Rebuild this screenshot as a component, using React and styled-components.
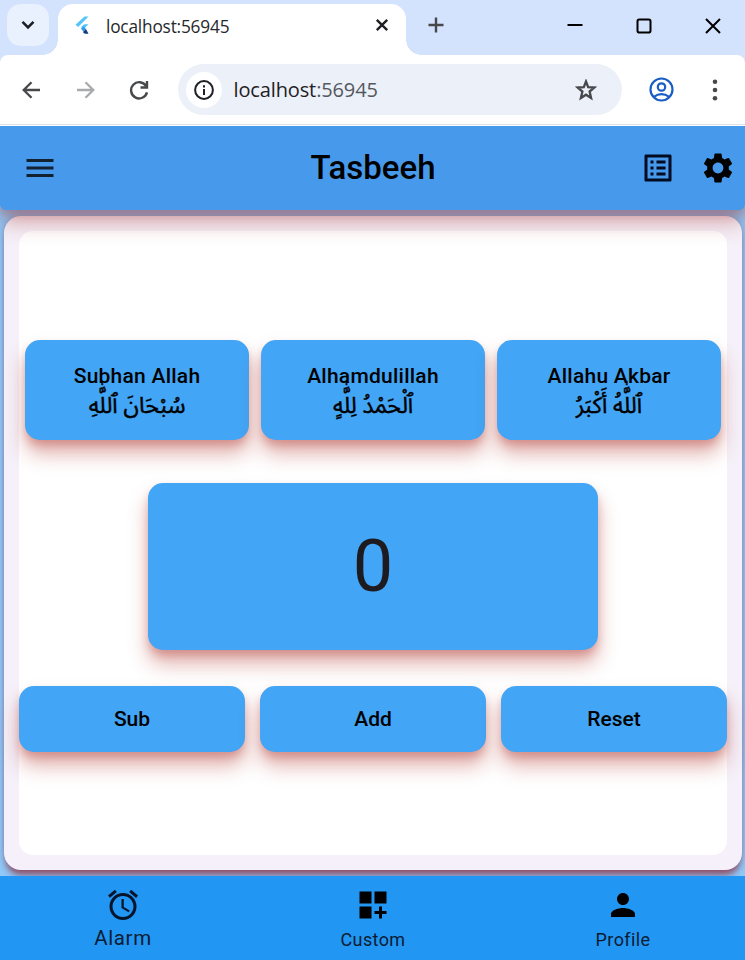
import React from "react";
import styled, { createGlobalStyle } from "styled-components";
import {
  MdMenu,
  MdListAlt,
  MdSettings,
  MdAlarm,
  MdDashboardCustomize,
  MdPerson,
} from "react-icons/md";

const GlobalStyle = createGlobalStyle`
  *, *::before, *::after { box-sizing: border-box; }
  body { margin: 0; }
  button { border: 0; padding: 0; background: none; font: inherit; color: inherit; }
  svg { display: block; flex: none; }
`;

const Window = styled.div`
  display: flex;
  flex-direction: column;
  width: 745px;
  height: 960px;
  overflow: hidden;
  background: #d3e2fd;
  font-family: Roboto, "Liberation Sans", sans-serif;
  color: #000;
`;

const TabStrip = styled.div`
  display: flex;
  flex: none;
  height: 55px;
  padding-left: 7px;
`;

const TabSearch = styled.button`
  display: grid;
  place-items: center;
  width: 42px;
  height: 42px;
  margin-top: 4px;
  border-radius: 14px;
  background: #e9f0fe;
`;

const Tab = styled.div`
  position: relative;
  display: flex;
  align-items: center;
  width: 348px;
  height: 51px;
  margin: 4px 0 0 9px;
  padding: 0 16px 8px 17px;
  border-radius: 15px 15px 0 0;
  background: #fff;

  &::before,
  &::after {
    content: "";
    position: absolute;
    bottom: 0;
    width: 15px;
    height: 15px;
  }
  &::before {
    left: -15px;
    background: radial-gradient(circle at 0 0, transparent 14.5px, #fff 15px);
  }
  &::after {
    right: -15px;
    background: radial-gradient(circle at 100% 0, transparent 14.5px, #fff 15px);
  }
`;

const TabTitle = styled.span`
  flex: 1;
  margin: 3px 0 0 14px;
  font: 400 17.3px/24px "Open Sans", "Noto Sans", sans-serif;
  letter-spacing: -0.2px;
  color: #26282c;
`;

const NewTab = styled.button`
  display: grid;
  place-items: center;
  width: 30px;
  height: 50px;
  margin-left: 15px;
`;

const WindowControls = styled.div`
  display: flex;
  gap: 53px;
  margin: 18px 0 0 116px;
`;

const Toolbar = styled.div`
  display: flex;
  align-items: center;
  flex: none;
  height: 71px;
  padding: 0 0 1px 22px;
  border-bottom: 1px solid #fff;
  border-radius: 8px 8px 0 0;
  background: #fff;
  box-shadow: inset 0 -1px #dde1e6;
`;

const NavButtons = styled.div`
  display: flex;
  align-items: center;
  gap: 34.5px;
`;

const AddressBar = styled.div`
  display: flex;
  align-items: center;
  width: 444px;
  height: 51px;
  margin-left: 29px;
  padding: 0 25px 0 8px;
  border-radius: 26px;
  background: #ecf0f9;
`;

const SiteInfo = styled.button`
  display: grid;
  place-items: center;
  width: 36px;
  height: 36px;
  border-radius: 50%;
  background: #fff;
`;

const Url = styled.span`
  flex: 1;
  margin-left: 11.5px;
  font: 400 20px/28px "Open Sans", "Noto Sans", sans-serif;
  letter-spacing: -0.13px;
  color: #1f2024;
`;

const Port = styled.span`
  color: #55585e;
`;

const ToolbarEnd = styled.div`
  display: flex;
  align-items: center;
  gap: 38px;
  margin-left: 26.5px;
`;

const AppScreen = styled.div`
  display: flex;
  flex-direction: column;
  flex: 1;
  min-height: 0;
  overflow: hidden;
  background: #90caf9;
`;

const AppBar = styled.header`
  position: relative;
  z-index: 1;
  display: grid;
  grid-template-columns: 1fr auto 1fr;
  align-items: center;
  flex: none;
  height: 84px;
  padding: 0 9px 0 22px;
  border-radius: 0 0 6px 6px;
  background: #4799eb;
  box-shadow:
    0 12px 22px rgba(165, 50, 45, 0.4),
    0 5px 9px rgba(150, 50, 50, 0.22);
`;

const Title = styled.h1`
  margin: 0 12px 0 0;
  font-size: 33px;
  font-weight: 500;
  line-height: 40px;
`;

const AppBarActions = styled.div`
  display: flex;
  justify-content: flex-end;
  gap: 24px;
`;

const Card = styled.main`
  display: flex;
  flex: 1;
  min-height: 0;
  margin: 6px 3px 6px 4px;
  padding: 15px;
  border-radius: 17px;
  background: #f5f0f9;
  box-shadow:
    0 8px 7px -3px rgba(150, 30, 40, 0.65),
    0 1px 7px rgba(110, 115, 165, 0.6);
`;

const CardBody = styled.div`
  display: flex;
  flex-direction: column;
  align-items: center;
  flex: 1;
  padding-top: 109px;
  border-radius: 14px;
  background: #fff;
`;

const Tile = styled.button`
  display: flex;
  flex-direction: column;
  align-items: center;
  justify-content: center;
  border-radius: 15px;
  background: #42a5f5;
  box-shadow:
    0 14px 20px rgba(180, 55, 45, 0.38),
    0 6px 8px -1px rgba(170, 50, 45, 0.3);
`;

const PhraseRow = styled.div`
  display: flex;
  gap: 12px;
`;

const PhraseTile = styled(Tile)`
  width: 224px;
  height: 100.4px;
  padding-top: 2px;
`;

const Label = styled.span`
  font-size: 21px;
  font-weight: 500;
  line-height: 30px;
`;

const PhraseName = styled(Label)`
  letter-spacing: 0.24px;
`;

const Arabic = styled(Label)`
  font-family: "Noto Sans Arabic", "DejaVu Sans", sans-serif;
  font-size: 22.6px;
  font-weight: 400;
  -webkit-text-stroke: 0.45px #000;
`;

const CounterTile = styled(Tile)`
  width: 450px;
  height: 167.300px;
  margin-top: 42.300px;
  padding-top: 1px;
  font-size: 72px;
  color: #1d1b20;
`;

const ActionRow = styled.div`
  display: flex;
  gap: 15px;
  margin-top: 36px;
`;

const ActionTile = styled(Tile)`
  width: 226px;
  height: 66px;
`;

const BottomNav = styled.nav`
  position: relative;
  display: grid;
  grid-template-columns: 246px 254px 246px;
  flex: none;
  height: 84px;
  background: #2196f3;
`;

const NavItem = styled.button`
  display: flex;
  flex-direction: column;
  align-items: center;
  padding-top: 11px;
`;

const NavLabel = styled.span`
  margin-top: ${(p) => (p.$active ? "1px" : "3px")};
  font-size: ${(p) => (p.$active ? "20.5px" : "18px")};
  line-height: 28px;
  letter-spacing: ${(p) => (p.$active ? "0.6px" : "0.4px")};
  color: #0b1c33;
`;

const Stroke = styled.svg.attrs({ fill: "none" })`
  stroke: ${(p) => p.$color || "#47484a"};
  stroke-width: ${(p) => p.$weight || 2};
`;

function FlutterLogo() {
  return (
    <svg width="17" height="19" viewBox="0 0 17 19">
      <path fill="#54c5f8" d="M9.500 0.500H13.500L3.200 11 0.500 8.700z" />
      <path fill="#54c5f8" d="M9.300 8.200h4.200L8.500 13.300 6 11z" />
      <path fill="#2a9be8" d="M6 12.800l2.500-2.400L11 13l-2.500 2.500z" />
      <path fill="#123a7c" d="M8.500 15.500L11 13l2.500 4.700H9.800L7.800 16z" />
    </svg>
  );
}

const phrases = [
  { name: "Subhan Allah", arabic: "سُبْحَانَ ٱللَّٰهِ" },
  { name: "Alhamdulillah", arabic: "ٱلْحَمْدُ لِلَّٰهٍ" },
  { name: "Allahu Akbar", arabic: "ٱللَّٰهُ أَكْبَرُ" },
];

const actions = ["Sub", "Add", "Reset"];

const navItems = [
  { label: "Alarm", Icon: MdAlarm, active: true },
  { label: "Custom", Icon: MdDashboardCustomize },
  { label: "Profile", Icon: MdPerson },
];

function BrowserChrome() {
  return (
    <>
      <TabStrip>
        <TabSearch>
          <Stroke $color="#1b1e25" $weight={2.6} width="14" height="10" viewBox="0 0 14 10">
            <path d="M1.500 1.800L7 7.300l5.500-5.500" />
          </Stroke>
        </TabSearch>
        <Tab>
          <FlutterLogo />
          <TabTitle>localhost:56945</TabTitle>
          <Stroke $color="#1f2024" $weight={2.4} width="16" height="16" viewBox="0 0 16 16">
            <path d="M2.800 1.800l10.400 10.400M13.200 1.800L2.800 12.200" />
          </Stroke>
        </Tab>
        <NewTab>
          <Stroke $weight={2.4} width="16" height="16" viewBox="0 0 16 16">
            <path d="M8 0.500v15M0.500 8h15" />
          </Stroke>
        </NewTab>
        <WindowControls>
          <Stroke $color="#000" width="16" height="16" viewBox="0 0 16 16">
            <path d="M0.500 7h15" />
          </Stroke>
          <Stroke $color="#000" width="16" height="16" viewBox="0 0 16 16">
            <rect x="1.500" y="1.500" width="13" height="13" rx="1.800" />
          </Stroke>
          <Stroke $color="#000" width="16" height="16" viewBox="0 0 16 16">
            <path d="M1 1l14 14M15 1L1 15" />
          </Stroke>
        </WindowControls>
      </TabStrip>
      <Toolbar>
        <NavButtons>
          <Stroke $weight={2.3} width="18" height="18" viewBox="0 0 18 18">
            <path d="M18 9H2M9.500 1.200L1.700 9l7.800 7.800" />
          </Stroke>
          <Stroke $color="#a9aaab" $weight={2.3} width="20" height="18" viewBox="0 0 20 18">
            <path d="M2 9h16.500M10.500 1.200L18.300 9l-7.800 7.800" />
          </Stroke>
          <Stroke $weight={2.4} width="20" height="20" viewBox="0 0 20 20">
            <path d="M18 12.400A8.100 8.100 0 1 1 17 5.900M18 1v6.500h-6.500" />
          </Stroke>
        </NavButtons>
        <AddressBar>
          <SiteInfo>
            <Stroke $color="#1f2024" $weight={2} width="20" height="20" viewBox="0 0 20 20">
              <circle cx="10" cy="10" r="8.900" />
              <path d="M10 9v6M10 5.200v2.200" />
            </Stroke>
          </SiteInfo>
          <Url>
            localhost<Port>:56945</Port>
          </Url>
          <Stroke $weight={2.3} width="22" height="22" viewBox="0 0 22 22">
            <path d="M11 2.500l2.200 5.700 6.100.4-4.700 3.900 1.500 6.500L11 15.700 5.900 19l1.500-6.500-4.700-3.900 6.100-.4z" />
          </Stroke>
        </AddressBar>
        <ToolbarEnd>
          <Stroke $color="#1a5dc4" $weight={2.2} width="25" height="25" viewBox="0 0 25 25">
            <circle cx="12.500" cy="12.500" r="11" />
            <circle cx="12.500" cy="10" r="3.700" />
            <path d="M4.800 19.800q7.700-5.400 15.400 0" />
          </Stroke>
          <svg width="6" height="22" viewBox="0 0 6 22" fill="#47484a">
            <circle cx="3" cy="2.800" r="2.300" />
            <circle cx="3" cy="11" r="2.300" />
            <circle cx="3" cy="19.200" r="2.300" />
          </svg>
        </ToolbarEnd>
      </Toolbar>
    </>
  );
}

export default function App() {
  return (
    <Window>
      <GlobalStyle />
      <BrowserChrome />
      <AppScreen>
        <AppBar>
          <MdMenu size={36} color="#132130" />
          <Title>Tasbeeh</Title>
          <AppBarActions>
            <MdListAlt size={36} color="#020b20" />
            <MdSettings size={36} />
          </AppBarActions>
        </AppBar>
        <Card>
          <CardBody>
            <PhraseRow>
              {phrases.map(({ name, arabic }) => (
                <PhraseTile key={name}>
                  <PhraseName>{name}</PhraseName>
                  <Arabic lang="ar" dir="rtl">{arabic}</Arabic>
                </PhraseTile>
              ))}
            </PhraseRow>
            <CounterTile>0</CounterTile>
            <ActionRow>
              {actions.map((action) => (
                <ActionTile key={action}>
                  <Label>{action}</Label>
                </ActionTile>
              ))}
            </ActionRow>
          </CardBody>
        </Card>
        <BottomNav>
          {navItems.map(({ label, Icon, active }) => (
            <NavItem key={label}>
              <Icon size={36} color={active ? "#04152b" : "#000"} />
              <NavLabel $active={active}>{label}</NavLabel>
            </NavItem>
          ))}
        </BottomNav>
      </AppScreen>
    </Window>
  );
}
